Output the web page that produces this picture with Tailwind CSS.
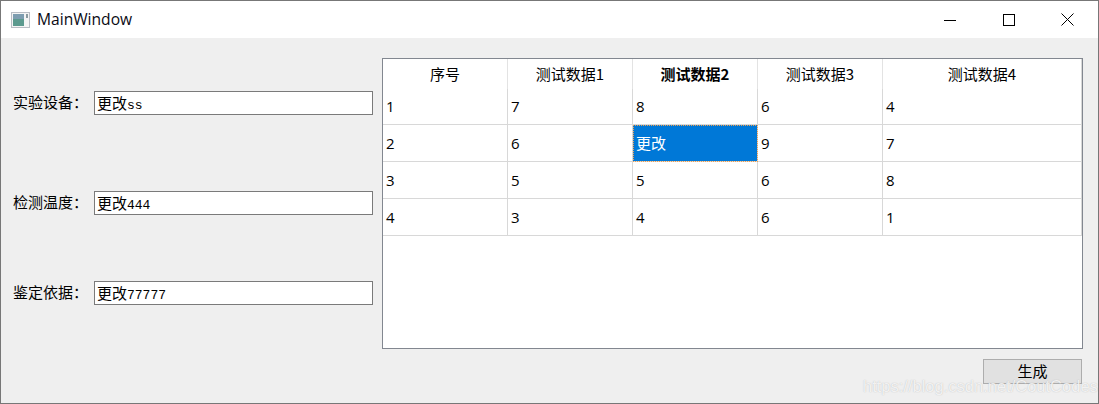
<!DOCTYPE html>
<html lang="zh">
<head>
<meta charset="utf-8">
<title>MainWindow</title>
<script src="https://cdn.jsdelivr.net/npm/@tailwindcss/browser@4"></script>
</head>
<body class="bg-white overflow-hidden">
<div class="relative w-[1099px] h-[404px] flex flex-col border border-[#777777] font-['Noto_Sans_CJK_SC',sans-serif] text-black bg-[#efefef]">
  <!-- title bar -->
  <div class="h-[37px] bg-white flex items-center shrink-0">
    <svg class="ml-[10px] w-[20px] h-[16px]" viewBox="0 0 20 16">
      <rect x="0.5" y="0.5" width="18" height="15" fill="#f4f4f4" stroke="#b9bdc4"/>
      <rect x="2" y="2" width="11" height="12" fill="#5c9a8e"/>
      <rect x="2" y="2" width="11" height="5" fill="#7d9db0"/>
      <rect x="15" y="2" width="2" height="4" fill="#8b9aa0"/>
    </svg>
    <span class="ml-[6px] text-[15.6px] font-['Open_Sans',sans-serif] text-[#0a0a14]">MainWindow</span>
    <div class="ml-auto flex items-center mr-[1px]">
      <div class="w-[59px] h-[37px] flex items-center justify-center">
        <svg class="w-[12px] h-[12px]" viewBox="0 0 12 12"><path d="M0 6.5H12" stroke="#000" stroke-width="1"/></svg>
      </div>
      <div class="w-[59px] h-[37px] flex items-center justify-center">
        <svg class="w-[12px] h-[12px]" viewBox="0 0 12 12"><rect x="0.5" y="0.5" width="11" height="11" fill="none" stroke="#000"/></svg>
      </div>
      <div class="w-[59px] h-[37px] flex items-center justify-center">
        <svg class="w-[13px] h-[13px]" viewBox="0 0 13 13"><path d="M0.5 0.5L12.5 12.5M12.5 0.5L0.5 12.5" stroke="#000" stroke-width="1"/></svg>
      </div>
    </div>
  </div>

  <!-- body -->
  <div class="flex-1 flex">
    <!-- form column -->
    <div class="w-[381px] shrink-0 pl-[12px] pt-[53px] text-[15px]">
      <div class="flex items-center h-[24px]">
        <span class="w-[81px] leading-[22px] mb-[2px]">实验设备：</span>
        <div class="w-[279px] h-[24px] bg-white border border-[#7a7a7a] pl-[2px] leading-[22px]">更改<span class="font-['Liberation_Mono',monospace] text-[13px]">ss</span></div>
      </div>
      <div class="flex items-center h-[24px] mt-[76px]">
        <span class="w-[81px] leading-[22px] mb-[2px]">检测温度：</span>
        <div class="w-[279px] h-[24px] bg-white border border-[#7a7a7a] pl-[2px] leading-[22px]">更改<span class="font-['Liberation_Mono',monospace] text-[13px]">444</span></div>
      </div>
      <div class="flex items-center h-[24px] mt-[66px]">
        <span class="w-[81px] leading-[22px] mb-[2px]">鉴定依据：</span>
        <div class="w-[279px] h-[24px] bg-white border border-[#7a7a7a] pl-[2px] leading-[22px]">更改<span class="font-['Liberation_Mono',monospace] text-[13px]">77777</span></div>
      </div>
    </div>

    <!-- table + button -->
    <div class="flex flex-col pt-[20px]">
      <div class="w-[701px] h-[291px] bg-white border border-[#828790] text-[15px]">
        <div class="grid grid-cols-[125px_125px_125px_125px_199px] grid-rows-[30px_36px_37px_37px_37px]">
          <div class="border-r border-[#e3e3e3] flex items-center justify-center">序号</div>
          <div class="border-r border-[#e3e3e3] flex items-center justify-center">测试数据1</div>
          <div class="border-r border-[#e3e3e3] flex items-center justify-center font-bold">测试数据2</div>
          <div class="border-r border-[#e3e3e3] flex items-center justify-center">测试数据3</div>
          <div class="border-r border-[#d8d8d8] flex items-center justify-center">测试数据4</div>

          <div class="border-r border-b border-[#d8d8d8] flex items-center pl-[3px] font-['Open_Sans',sans-serif]">1</div>
          <div class="border-r border-b border-[#d8d8d8] flex items-center pl-[3px] font-['Open_Sans',sans-serif]">7</div>
          <div class="border-r border-b border-[#d8d8d8] flex items-center pl-[3px] font-['Open_Sans',sans-serif]">8</div>
          <div class="border-r border-b border-[#d8d8d8] flex items-center pl-[3px] font-['Open_Sans',sans-serif]">6</div>
          <div class="border-r border-b border-[#d8d8d8] flex items-center pl-[3px] font-['Open_Sans',sans-serif]">4</div>

          <div class="border-r border-b border-[#d8d8d8] flex items-center pl-[3px] font-['Open_Sans',sans-serif]">2</div>
          <div class="border-r border-b border-[#d8d8d8] flex items-center pl-[3px] font-['Open_Sans',sans-serif]">6</div>
          <div class="border-r border-b border-[#d8d8d8] bg-[#0078d7] text-white flex items-center pl-[3px] outline-1 outline-dotted -outline-offset-1 outline-[#f0a050]">更改</div>
          <div class="border-r border-b border-[#d8d8d8] flex items-center pl-[3px] font-['Open_Sans',sans-serif]">9</div>
          <div class="border-r border-b border-[#d8d8d8] flex items-center pl-[3px] font-['Open_Sans',sans-serif]">7</div>

          <div class="border-r border-b border-[#d8d8d8] flex items-center pl-[3px] font-['Open_Sans',sans-serif]">3</div>
          <div class="border-r border-b border-[#d8d8d8] flex items-center pl-[3px] font-['Open_Sans',sans-serif]">5</div>
          <div class="border-r border-b border-[#d8d8d8] flex items-center pl-[3px] font-['Open_Sans',sans-serif]">5</div>
          <div class="border-r border-b border-[#d8d8d8] flex items-center pl-[3px] font-['Open_Sans',sans-serif]">6</div>
          <div class="border-r border-b border-[#d8d8d8] flex items-center pl-[3px] font-['Open_Sans',sans-serif]">8</div>

          <div class="border-r border-b border-[#d8d8d8] flex items-center pl-[3px] font-['Open_Sans',sans-serif]">4</div>
          <div class="border-r border-b border-[#d8d8d8] flex items-center pl-[3px] font-['Open_Sans',sans-serif]">3</div>
          <div class="border-r border-b border-[#d8d8d8] flex items-center pl-[3px] font-['Open_Sans',sans-serif]">4</div>
          <div class="border-r border-b border-[#d8d8d8] flex items-center pl-[3px] font-['Open_Sans',sans-serif]">6</div>
          <div class="border-r border-b border-[#d8d8d8] flex items-center pl-[3px] font-['Open_Sans',sans-serif]">1</div>
        </div>
      </div>
      <div class="flex justify-end mt-[10px] pr-[1px]">
        <div class="w-[99px] h-[25px] bg-[#e1e1e1] border border-[#adadad] flex items-center justify-center text-[15px]">生成</div>
      </div>
    </div>
  </div>

  <!-- watermark over the window corner -->
  <span class="absolute left-[862px] top-[375px] text-[16.5px] leading-[20px] font-['Liberation_Sans',sans-serif] text-white/80 [text-shadow:0_0_1px_rgba(120,120,120,0.5)]">https://blog.csdn.net/CoutCodes</span>
</div>
</body>
</html>
